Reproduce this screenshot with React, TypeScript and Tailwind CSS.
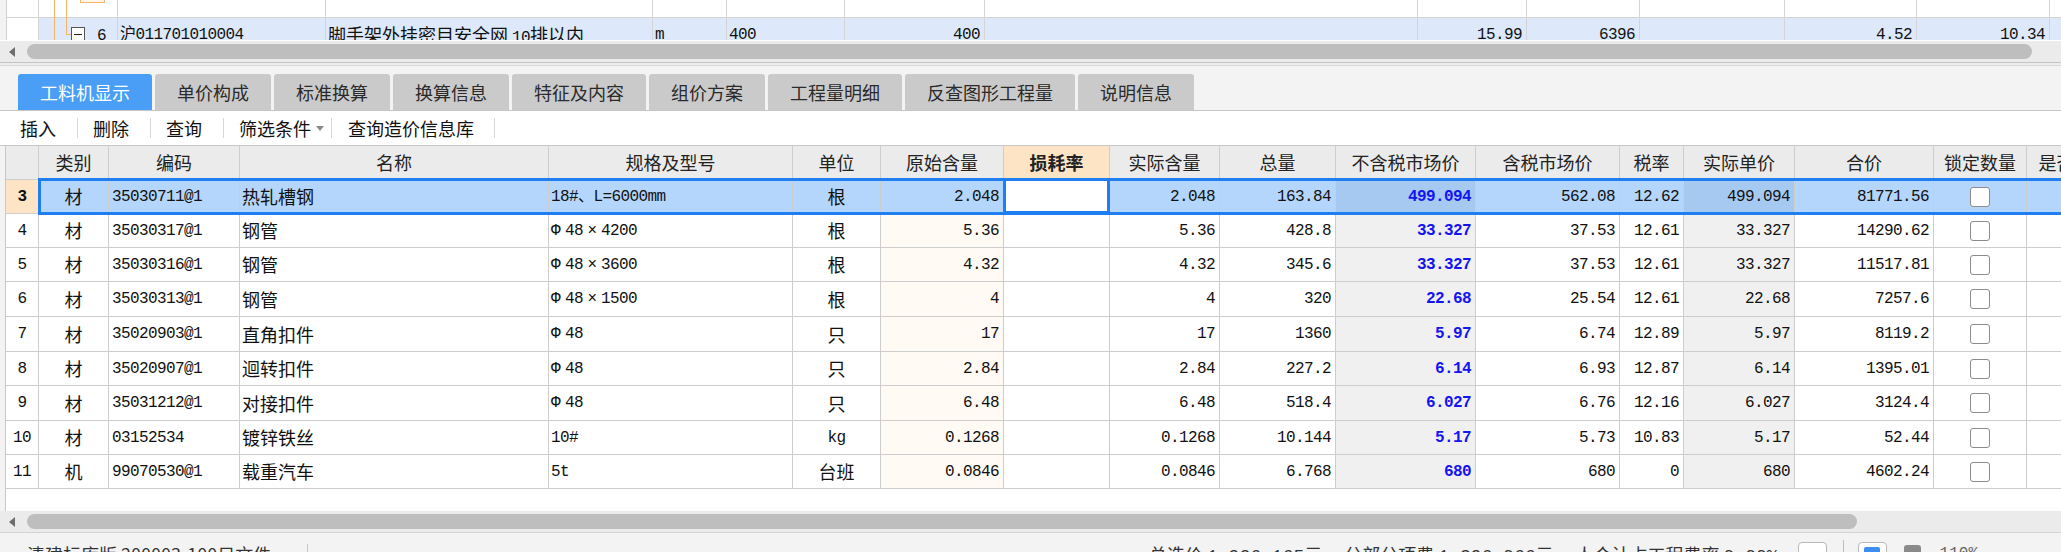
import React from "react";

const cjk = "[font-family:'Noto_Sans_CJK_SC',sans-serif]";
const mono = "[font-family:'Liberation_Mono','Noto_Sans_CJK_SC',monospace]";

type Row = {
  n: string;
  kind: string;
  code: string;
  name: string;
  spec: string;
  unit: string;
  orig: string;
  act: string;
  total: string;
  nt: string;
  wt: string;
  rate: string;
  up: string;
  sum: string;
  h: string;
};

const rows: Row[] = [
  { n: "3", kind: "材", code: "35030711@1", name: "热轧槽钢", spec: "18#、L=6000mm", unit: "根", orig: "2.048", act: "2.048", total: "163.84", nt: "499.094", wt: "562.08", rate: "12.62", up: "499.094", sum: "81771.56", h: "h-[34px]" },
  { n: "4", kind: "材", code: "35030317@1", name: "钢管", spec: "Φ48×4200", unit: "根", orig: "5.36", act: "5.36", total: "428.8", nt: "33.327", wt: "37.53", rate: "12.61", up: "33.327", sum: "14290.62", h: "h-[34px]" },
  { n: "5", kind: "材", code: "35030316@1", name: "钢管", spec: "Φ48×3600", unit: "根", orig: "4.32", act: "4.32", total: "345.6", nt: "33.327", wt: "37.53", rate: "12.61", up: "33.327", sum: "11517.81", h: "h-[34px]" },
  { n: "6", kind: "材", code: "35030313@1", name: "钢管", spec: "Φ48×1500", unit: "根", orig: "4", act: "4", total: "320", nt: "22.68", wt: "25.54", rate: "12.61", up: "22.68", sum: "7257.6", h: "h-[35px]" },
  { n: "7", kind: "材", code: "35020903@1", name: "直角扣件", spec: "Φ48", unit: "只", orig: "17", act: "17", total: "1360", nt: "5.97", wt: "6.74", rate: "12.89", up: "5.97", sum: "8119.2", h: "h-[35px]" },
  { n: "8", kind: "材", code: "35020907@1", name: "迴转扣件", spec: "Φ48", unit: "只", orig: "2.84", act: "2.84", total: "227.2", nt: "6.14", wt: "6.93", rate: "12.87", up: "6.14", sum: "1395.01", h: "h-[34px]" },
  { n: "9", kind: "材", code: "35031212@1", name: "对接扣件", spec: "Φ48", unit: "只", orig: "6.48", act: "6.48", total: "518.4", nt: "6.027", wt: "6.76", rate: "12.16", up: "6.027", sum: "3124.4", h: "h-[35px]" },
  { n: "10", kind: "材", code: "03152534", name: "镀锌铁丝", spec: "10#", unit: "kg", orig: "0.1268", act: "0.1268", total: "10.144", nt: "5.17", wt: "5.73", rate: "10.83", up: "5.17", sum: "52.44", h: "h-[34px]" },
  { n: "11", kind: "机", code: "99070530@1", name: "载重汽车", spec: "5t", unit: "台班", orig: "0.0846", act: "0.0846", total: "6.768", nt: "680", wt: "680", rate: "0", up: "680", sum: "4602.24", h: "h-[34px]" },
];

const tabs = ["工料机显示", "单价构成", "标准换算", "换算信息", "特征及内容", "组价方案", "工程量明细", "反查图形工程量", "说明信息"];

const heads = [
  { t: "", w: "w-[33px]" },
  { t: "类别", w: "w-[70px]" },
  { t: "编码", w: "w-[131px]" },
  { t: "名称", w: "w-[309px]" },
  { t: "规格及型号", w: "w-[244px]" },
  { t: "单位", w: "w-[88px]" },
  { t: "原始含量", w: "w-[123px]" },
  { t: "损耗率", w: "w-[106px]" },
  { t: "实际含量", w: "w-[110px]" },
  { t: "总量", w: "w-[116px]" },
  { t: "不含税市场价", w: "w-[140px]" },
  { t: "含税市场价", w: "w-[144px]" },
  { t: "税率", w: "w-[64px]" },
  { t: "实际单价", w: "w-[111px]" },
  { t: "合价", w: "w-[139px]" },
  { t: "锁定数量", w: "w-[93px]" },
  { t: "是否暂估", w: "w-[96px]" },
];

const line = "border-[#cdcdcd]";
const num = `${mono} text-[16px] tracking-[-0.6px] text-[#111]`;

function Spec({ s }: { s: string }) {
  // Φ and × take the wide CJK widths of the original font
  return (
    <span className="whitespace-nowrap">
      {s.split("").map((ch, i) =>
        ch === "Φ" ? (
          <span key={i} className="inline-block w-[14px]">Φ</span>
        ) : ch === "×" ? (
          <span key={i} className="inline-block w-[18px] text-center">×</span>
        ) : (
          <span key={i}>{ch}</span>
        )
      )}
    </span>
  );
}

function Scroll({ thumb }: { thumb: string }) {
  return (
    <div className="h-[21px] shrink-0 bg-[#ebebeb] flex items-center">
      <div className="w-[27px] shrink-0 flex items-center justify-center pr-[3px]">
        <div className="w-0 h-0 border-y-[5px] border-y-transparent border-r-[6px] border-r-[#6e6e6e]" />
      </div>
      <div className={`${thumb} h-[15px] rounded-full bg-[#bebebe]`} />
    </div>
  );
}

function TopGrid() {
  const w = ["w-[32px]", "w-[79px]", "w-[208px]", "w-[327px]", "w-[74px]", "w-[118px]", "w-[140px]", "w-[433px]", "w-[109px]", "w-[113px]", "w-[145px]", "w-[132px]", "w-[133px]"];
  const cells = ["", "", "沪011701010004", "", "m", "400", "400", "", "15.99", "6396", "", "4.52", "10.34"];
  return (
    <div className="h-[41px] shrink-0 overflow-hidden flex bg-white border-b border-white">
      <div className="w-[7px] shrink-0 bg-[#f3f3f3] border-r border-[#d0d0d0]" />
      <div className="flex-1 flex flex-col">
        <div className="h-[18px] shrink-0 flex border-b border-[#d4d4d4]">
          {w.map((c, i) => (
            <div key={i} className={`${c} shrink-0 border-r border-[#d4d4d4] relative`}>
              {i === 1 && (
                <>
                  <div className="absolute left-[15px] top-0 bottom-[-1px] w-px bg-[#f5b46a]" />
                  <div className="absolute left-[27px] top-0 bottom-[-1px] w-px bg-[#f5b46a]" />
                  <div className="absolute left-[41px] top-[-12px] w-[25px] h-[15px] border border-[#f5b46a] bg-[#fff6ea]" />
                </>
              )}
            </div>
          ))}
        </div>
        <div className="h-[34px] shrink-0 flex bg-[#dde9fb]">
          {w.map((c, i) => (
            <div
              key={i}
              className={`${c} shrink-0 border-r border-[#d4d4d4] relative flex items-center ${i >= 6 && i !== 7 ? "justify-end pr-[4px]" : "pl-[2px]"} ${i === 0 ? "bg-white" : ""}`}
            >
              {i === 1 && (
                <>
                  <div className="absolute left-[15px] top-0 bottom-0 w-px bg-[#f5b46a]" />
                  <div className="absolute left-[27px] top-0 h-[16px] w-px bg-[#f5b46a]" />
                  <div className="absolute left-[27px] top-[16px] w-[5px] h-px bg-[#f5b46a]" />
                  <div className="absolute left-[32px] top-[9px] w-[14px] h-[14px] border border-[#555] bg-white flex items-center justify-center">
                    <div className="w-[8px] h-px bg-[#222]" />
                  </div>
                  <span className={`absolute left-[58px] top-[6px] ${num}`}>6</span>
                </>
              )}
              {i === 3 && (
                <span className="whitespace-nowrap">
                  <span className={`${cjk} text-[18px] text-[#111]`}>脚手架外挂密目安全网 </span>
                  <span className={num}>10</span>
                  <span className={`${cjk} text-[18px] text-[#111]`}>排以内</span>
                </span>
              )}
              {i !== 1 && i !== 3 && cells[i] && <span className={num}>{cells[i]}</span>}
            </div>
          ))}
        </div>
      </div>
    </div>
  );
}

function Tabs() {
  return (
    <div className="h-[45px] shrink-0 bg-[#f3f3f3] flex items-end gap-[3px] pl-[18px] border-b border-[#c6c6c6]">
      {tabs.map((t, i) => (
        <div
          key={t}
          className={`h-[36px] px-[22px] rounded-t-[3px] flex items-center text-[18px] ${cjk} ${i === 0 ? "bg-[#4a9ef6] text-white" : "bg-[#cacaca] text-[#2a2a2a]"}`}
        >
          {t}
        </div>
      ))}
    </div>
  );
}

function Toolbar() {
  const sep = <div className="w-px h-[20px] bg-[#d8d8d8]" />;
  return (
    <div className={`h-[34px] shrink-0 bg-white flex items-center pl-[5px] text-[18px] text-[#111] ${cjk}`}>
      <span className="pl-[15px] pr-[21px]">插入</span>
      {sep}
      <span className="pl-[15px] pr-[21px]">删除</span>
      {sep}
      <span className="pl-[15px] pr-[21px]">查询</span>
      {sep}
      <span className="pl-[15px] pr-[7px] flex items-center">
        筛选条件
        <span className="ml-[5px] w-0 h-0 border-x-[4px] border-x-transparent border-t-[5px] border-t-[#8a8a8a]" />
      </span>
      {sep}
      <span className="pl-[16px] pr-[20px]">查询造价信息库</span>
      {sep}
    </div>
  );
}

function DataRow({ r, sel }: { r: Row; sel: boolean }) {
  const base = `shrink-0 h-full border-r border-b ${line} flex items-center`;
  const bg = sel ? "bg-[#b4d6fc]" : "bg-white";
  const dark = sel ? "bg-[#a6c9f2]" : "bg-[#f0f0f0]";
  const right = "justify-end pr-[4px]";
  return (
    <div className={`${r.h} shrink-0 flex relative`}>
      <div className={`${base} w-[33px] justify-center ${sel ? "bg-[#fde4c5] font-bold" : "bg-white"} ${num}`}>{r.n}</div>
      <div className={`${base} w-[70px] justify-center ${bg} ${cjk} text-[18px] text-[#111]`}>{r.kind}</div>
      <div className={`${base} w-[131px] pl-[3px] ${bg} ${num}`}>{r.code}</div>
      <div className={`${base} w-[309px] pl-[2px] ${bg} ${cjk} text-[18px] text-[#111]`}>{r.name}</div>
      <div className={`${base} w-[244px] pl-[2px] ${bg} ${num}`}>
        <Spec s={r.spec} />
      </div>
      <div className={`${base} w-[88px] justify-center ${bg} ${r.unit === "kg" ? num : `${cjk} text-[18px] text-[#111]`}`}>{r.unit}</div>
      <div className={`${base} w-[123px] ${right} ${sel ? bg : "bg-[#fffaf3]"} ${num}`}>{r.orig}</div>
      <div className={`${base} w-[106px] bg-white relative`}>
        {sel && <div className="absolute left-[-1px] top-[-2px] bottom-[-1px] right-[-1px] border-[3px] border-[#1f7ff0] bg-white z-20" />}
      </div>
      <div className={`${base} w-[110px] ${right} ${bg} ${num}`}>{r.act}</div>
      <div className={`${base} w-[116px] ${right} ${bg} ${num}`}>{r.total}</div>
      <div className={`${base} w-[140px] ${right} ${dark} ${mono} text-[16px] tracking-[-0.6px] font-bold text-[#1414f2]`}>{r.nt}</div>
      <div className={`${base} w-[144px] ${right} ${bg} ${num}`}>{r.wt}</div>
      <div className={`${base} w-[64px] ${right} ${bg} ${num}`}>{r.rate}</div>
      <div className={`${base} w-[111px] ${right} ${dark} ${num}`}>{r.up}</div>
      <div className={`${base} w-[139px] ${right} ${bg} ${num}`}>{r.sum}</div>
      <div className={`${base} w-[93px] justify-center ${bg}`}>
        <div className="w-[20px] h-[20px] bg-white border border-[#8c8c8c] rounded-[3px]" />
      </div>
      <div className={`${base} w-[96px] ${bg}`} />
      {sel && <div className="absolute left-[32px] top-[-2px] bottom-[-1px] right-[-20px] border-[3px] border-[#1f7ff0] pointer-events-none z-10" />}
    </div>
  );
}

function MainGrid() {
  return (
    <div className="h-[366px] shrink-0 flex bg-white border-t border-[#c8c8c8]">
      <div className="w-[6px] shrink-0 bg-[#f3f3f3] border-r border-[#c8c8c8]" />
      <div className="flex-1 flex flex-col overflow-hidden">
        <div className="h-[34px] shrink-0 flex bg-[#ebebeb]">
          {heads.map((h, i) => (
            <div
              key={i}
              className={`${h.w} shrink-0 h-full border-r border-b ${line} flex items-center justify-center ${cjk} text-[18px] text-[#222] ${i === 7 ? "bg-[#fde4c5] font-bold" : ""}`}
            >
              {h.t}
            </div>
          ))}
        </div>
        {rows.map((r, i) => (
          <DataRow key={r.n} r={r} sel={i === 0} />
        ))}
      </div>
    </div>
  );
}

function StatusBar() {
  return (
    <div className={`flex-1 flex items-start border-t border-[#d4d4d4] bg-[#f3f3f3] pt-[11px] text-[18px] leading-[20px] text-[#333] ${cjk}`}>
      <div className="w-[308px] shrink-0 pl-[27px] border-r border-[#c8c8c8] h-[30px]">
        清建标库版 200003-100日文件
      </div>
      <div className="flex-1" />
      <div className="whitespace-nowrap">
        总造价 <span className={mono}>1,926,165</span>元　 分部分项费 <span className={mono}>1,396,066</span>元　 人合计占工程费率 <span className={mono}>0.00%</span>
      </div>
      <div className="ml-[20px] mt-[-2px] w-[29px] h-[26px] bg-white border border-[#b8b8b8] rounded-[4px]" />
      <div className="ml-[16px] mt-[-4px] w-px h-[24px] bg-[#bdbdbd]" />
      <div className="ml-[14px] mt-[-2px] w-[29px] h-[26px] bg-white border border-[#b8b8b8] rounded-[4px] flex items-center justify-center">
        <div className="w-[16px] h-[16px] rounded-[2px] bg-[#3c8ef0]" />
      </div>
      <div className="ml-[17px] mt-[1px] w-[17px] h-[20px] bg-[#8a8a8a] rounded-t-[3px]" />
      <div className={`ml-[19px] ${mono} text-[16px] text-[#666]`}>110%</div>
      <div className="w-[83px]" />
    </div>
  );
}

export default function App() {
  return (
    <div className="w-[2061px] h-[552px] overflow-hidden bg-[#f3f3f3] flex flex-col">
      <TopGrid />
      <Scroll thumb="w-[2005px]" />
      <div className="h-[4px] shrink-0 border-t border-b border-t-[#c4c4c4] border-b-[#d8d8d8] bg-[#ececec]" />
      <Tabs />
      <Toolbar />
      <MainGrid />
      <Scroll thumb="w-[1830px]" />
      <StatusBar />
    </div>
  );
}
